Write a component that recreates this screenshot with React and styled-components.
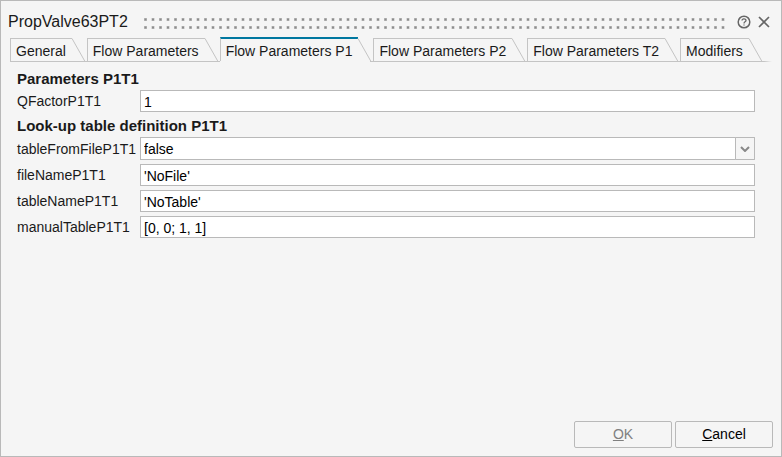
import React, { useState } from 'react';
import styled, { createGlobalStyle } from 'styled-components';

const GlobalStyle = createGlobalStyle`
  * {
    box-sizing: border-box;
  }

  body {
    margin: 0;
    background: #f5f5f5;
    color: #1a1a1a;
    font-family: 'Liberation Sans', Arial, sans-serif;
    font-size: 14px;
  }

  button,
  input,
  select {
    font: inherit;
    color: inherit;
  }
`;

const Dialog = styled.form`
  display: flex;
  flex-direction: column;
  min-height: 100vh;
  border: 1px solid #b9b9b9;
  background: #f5f5f5;
`;

const TitleBar = styled.header`
  display: flex;
  align-items: center;
  height: 36px;
  padding: 6px 7px 0 7px;
`;

const Title = styled.h1`
  margin: 0 16px 0 0;
  font-size: 16px;
  font-weight: 400;
`;

const Grip = styled.svg`
  flex: 1;
  min-width: 0;
  height: 14px;
  margin-right: 9px;
`;

const IconButton = styled.button`
  display: flex;
  align-items: center;
  justify-content: center;
  width: 20px;
  height: 20px;
  padding: 0;
  border: none;
  background: none;
  color: #666;
  cursor: pointer;
`;

const TabList = styled.div`
  display: flex;
  height: 25px;
  margin: 0 9px;
`;

const TabButton = styled.button`
  display: flex;
  align-items: stretch;
  height: 25px;
  padding: 0;
  border: none;
  border-bottom: 1px solid ${props => (props.$active ? 'transparent' : '#c4c4c4')};
  background: none;
  line-height: ${props => (props.$active ? '24px' : '25px')};
  white-space: nowrap;
  cursor: pointer;
`;

const TabLabel = styled.span`
  margin-top: ${props => (props.$active ? '0' : '1px')};
  padding: 0 6px 0 5px;
  border-left: 1px solid #c4c4c4;
  border-top: ${props => (props.$active ? '2px solid #0078a0' : '1px solid #c4c4c4')};
`;

const Slant = styled.svg`
  width: 15px;
  height: 25px;
  overflow: visible;
`;

const TabRule = styled.div`
  flex: 1;
  max-width: 12px;
  height: 25px;
  background: linear-gradient(to right, #c4c4c4, #f5f5f5) bottom / 100% 1px no-repeat;
`;

const Panel = styled.section`
  flex: 1;
  padding: 7px 26px 12px 16px;
`;

const GroupTitle = styled.h2`
  margin: 0;
  padding-bottom: 2px;
  font-size: 15px;
  font-weight: 700;
  line-height: 19px;
`;

const Row = styled.div`
  display: grid;
  grid-template-columns: 123px 1fr;
  align-items: center;
  margin-bottom: 4px;
`;

const Label = styled.label`
  white-space: nowrap;
`;

const TextInput = styled.input`
  width: 100%;
  height: 22px;
  padding: 2px 3px 0;
  border: 1px solid #b9b9b9;
  border-radius: 0;
  background: #fff;
  color: #000;
`;

const SelectBox = styled.div`
  position: relative;
`;

const Select = styled.select`
  display: block;
  width: 100%;
  height: 23px;
  padding: 1px 24px 0 3px;
  border: 1px solid #b9b9b9;
  border-radius: 0;
  background: #fff;
  color: #000;
  appearance: none;
`;

const SelectArrow = styled.span`
  position: absolute;
  top: 0;
  right: 0;
  display: flex;
  align-items: center;
  justify-content: center;
  width: 20px;
  height: 23px;
  border: 1px solid #b9b9b9;
  border-radius: 1px;
  background: #f5f5f5;
  pointer-events: none;
`;

const Footer = styled.footer`
  display: flex;
  justify-content: flex-end;
  gap: 3px;
  padding: 0 8px 8px;
`;

const Button = styled.button`
  width: 98px;
  height: 27px;
  padding: 0 0 1px;
  border: 1px solid #b9b9b9;
  border-radius: 2px;
  background: #f5f5f5;
  color: #000;
  cursor: pointer;

  &:disabled {
    color: #808080;
    cursor: default;
  }
`;

const tabs = [
  'General',
  'Flow Parameters',
  'Flow Parameters P1',
  'Flow Parameters P2',
  'Flow Parameters T2',
  'Modifiers',
];

function Tab({ name, active, onSelect }) {
  return (
    <TabButton type="button" role="tab" aria-selected={active} $active={active} onClick={onSelect}>
      <TabLabel $active={active}>{name}</TabLabel>
      <Slant viewBox="0 0 15 25" aria-hidden="true">
        <path d="M0 1.5L13 24.5" fill="none" stroke="#c4c4c4" />
        {active && <path d="M12 24.5H15" stroke="#c4c4c4" />}
      </Slant>
    </TabButton>
  );
}

function TextRow({ name, value, onChange }) {
  return (
    <Row>
      <Label htmlFor={name}>{name}</Label>
      <TextInput id={name} value={value} onChange={e => onChange(name, e.target.value)} />
    </Row>
  );
}

function App() {
  const [activeTab, setActiveTab] = useState('Flow Parameters P1');
  const [values, setValues] = useState({
    QFactorP1T1: '1',
    tableFromFileP1T1: 'false',
    fileNameP1T1: "'NoFile'",
    tableNameP1T1: "'NoTable'",
    manualTableP1T1: '[0, 0; 1, 1]',
  });

  const setValue = (name, value) => setValues({ ...values, [name]: value });

  return (
    <>
      <GlobalStyle />
      <Dialog onSubmit={e => e.preventDefault()}>
        <TitleBar>
          <Title>PropValve63PT2</Title>
          <Grip aria-hidden="true">
            <defs>
              <pattern id="grip" width="15" height="14" patternUnits="userSpaceOnUse">
                <path d="M0 3h3v3h-3zM7.5 3h3v3h-3zM0 11h3v3h-3zM7.5 11h3v3h-3z" fill="#c2c2c2" />
                <path d="M.5 3.5h2v2h-2zM8 3.5h2v2h-2zM.5 11.5h2v2h-2zM8 11.5h2v2h-2z" fill="#8c8c8c" />
              </pattern>
            </defs>
            <rect width="100%" height="14" fill="url(#grip)" />
          </Grip>
          <IconButton type="button" aria-label="Help">
            <svg width="14" height="14" viewBox="0 0 14 14" fill="none" stroke="currentColor">
              <circle cx="7" cy="7" r="5.8" strokeWidth="1.5" />
              <path d="M5 5.6C5 3.2 9 3.2 9 5.5C9 6.9 7 6.8 7 8.4M7 9.4V10.6" strokeWidth="1.3" />
            </svg>
          </IconButton>
          <IconButton type="button" aria-label="Close">
            <svg width="12" height="12" viewBox="0 0 12 12" fill="none" stroke="currentColor">
              <path d="M1 1L11 11M11 1L1 11" strokeWidth="1.7" />
            </svg>
          </IconButton>
        </TitleBar>

        <TabList role="tablist">
          {tabs.map(name => (
            <Tab
              key={name}
              name={name}
              active={name === activeTab}
              onSelect={() => setActiveTab(name)}
            />
          ))}
          <TabRule />
        </TabList>

        <Panel role="tabpanel">
          <GroupTitle>Parameters P1T1</GroupTitle>
          <TextRow name="QFactorP1T1" value={values.QFactorP1T1} onChange={setValue} />

          <GroupTitle>Look-up table definition P1T1</GroupTitle>
          <Row>
            <Label htmlFor="tableFromFileP1T1">tableFromFileP1T1</Label>
            <SelectBox>
              <Select
                id="tableFromFileP1T1"
                value={values.tableFromFileP1T1}
                onChange={e => setValue('tableFromFileP1T1', e.target.value)}
              >
                <option>false</option>
                <option>true</option>
              </Select>
              <SelectArrow>
                <svg width="10" height="6" viewBox="0 0 10 6" fill="none" stroke="#888">
                  <path d="M1 1L5 5L9 1" strokeWidth="2" />
                </svg>
              </SelectArrow>
            </SelectBox>
          </Row>
          <TextRow name="fileNameP1T1" value={values.fileNameP1T1} onChange={setValue} />
          <TextRow name="tableNameP1T1" value={values.tableNameP1T1} onChange={setValue} />
          <TextRow name="manualTableP1T1" value={values.manualTableP1T1} onChange={setValue} />
        </Panel>

        <Footer>
          <Button type="submit" disabled>
            <u>O</u>K
          </Button>
          <Button type="button">
            <u>C</u>ancel
          </Button>
        </Footer>
      </Dialog>
    </>
  );
}

export default App;
